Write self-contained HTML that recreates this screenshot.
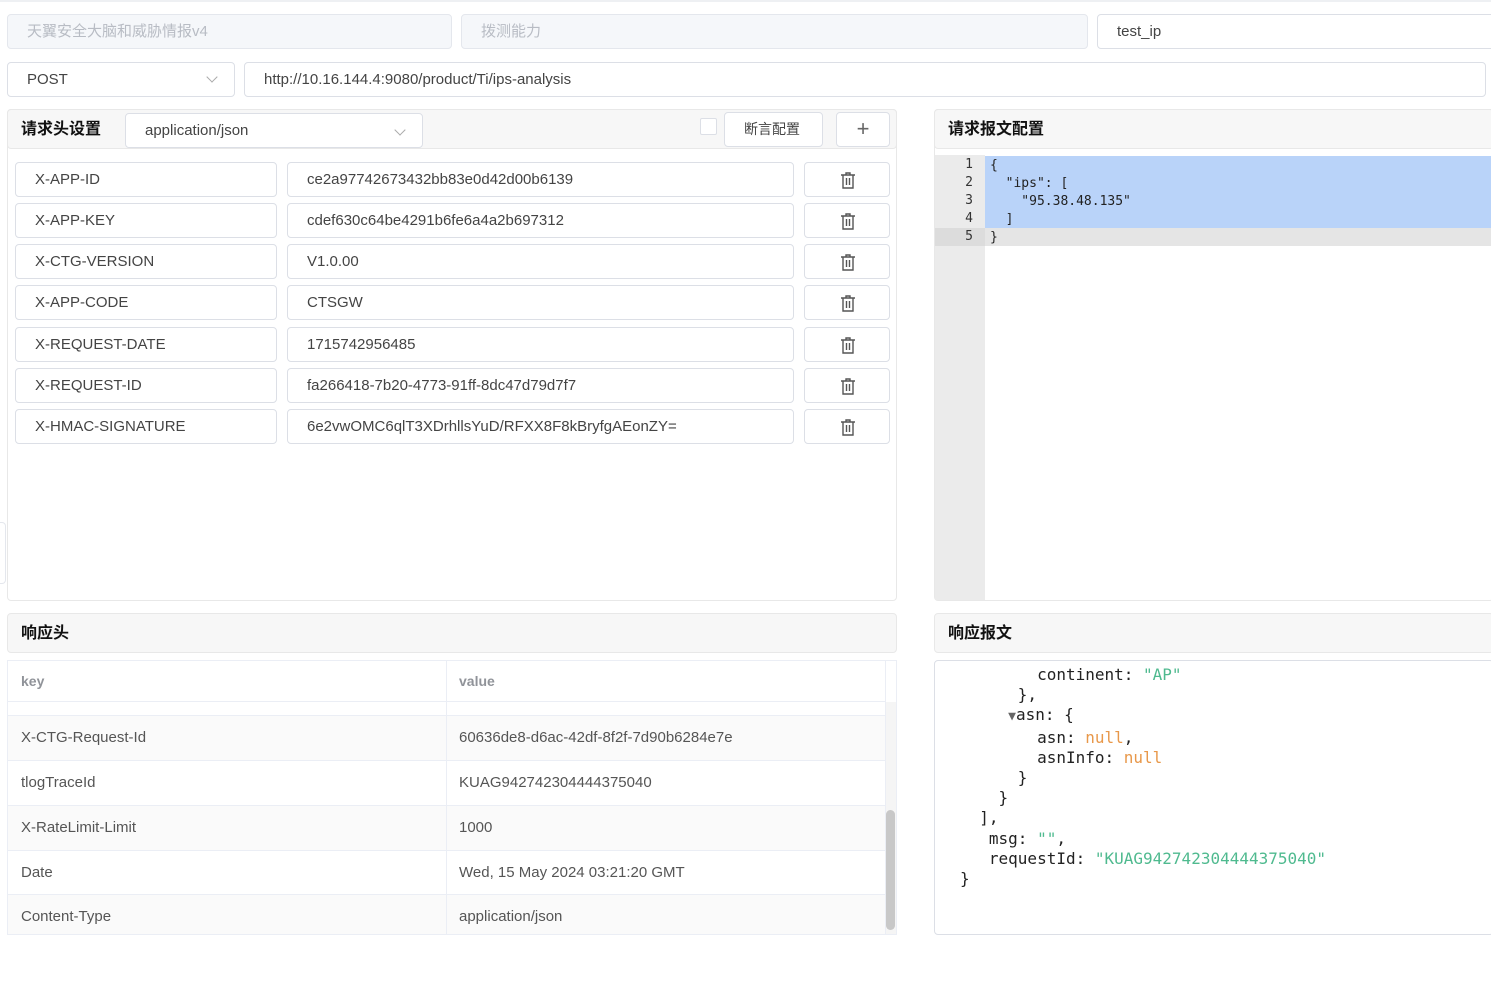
<!DOCTYPE html>
<html><head><meta charset="utf-8"><style>
*{box-sizing:border-box;margin:0;padding:0}
body{width:1491px;height:984px;overflow:hidden;background:#fff;font-family:"Liberation Sans","Noto Sans CJK SC",sans-serif;font-size:15px;color:#333;position:relative}
.a{position:absolute}
.inp{position:absolute;border:1px solid #dcdfe6;border-radius:4px;background:#fff;height:35px;line-height:33px;padding-left:19px;color:#444;font-size:15px;white-space:nowrap;overflow:hidden}
.dis{background:#f5f7fa;border-color:#e4e7ed;color:#b8bcc4}
.hdr{position:absolute;background:#f7f7f7;border:1px solid #e8e8e8;border-radius:4px;font-weight:bold;font-size:16px;color:#111;padding-left:13px;line-height:38px}
.chev{position:absolute;width:8px;height:8px;border-right:1px solid #aaa;border-bottom:1px solid #aaa;transform:rotate(45deg)}
.del{position:absolute;left:804px;width:86px;height:35px;border:1px solid #dcdfe6;border-radius:4px;background:#fff}
.del svg{position:absolute;left:35px;top:9px}
.mono{font-family:"DejaVu Sans Mono","Liberation Mono",monospace}
.tr{position:absolute;left:8px;width:877px;border-bottom:1px solid #ebeef5;font-size:15px;color:#555}
.tr span{position:absolute;left:13px}
.tr b{position:absolute;left:451px;font-weight:normal}
</style></head><body>
<div class="a" style="left:0;top:0;width:1491px;height:2px;background:#eef0f3"></div>
<div class="inp dis" style="left:7px;top:14px;width:445px;height:35px">天翼安全大脑和威胁情报v4</div>
<div class="inp dis" style="left:461px;top:14px;width:627px;height:35px">拨测能力</div>
<div class="inp" style="left:1097px;top:14px;width:400px;height:35px">test_ip</div>
<div class="inp" style="left:7px;top:62px;width:228px;height:35px">POST</div>
<div class="chev" style="left:208px;top:73px"></div>
<div class="inp" style="left:244px;top:62px;width:1242px;height:35px">http://10.16.144.4:9080/product/Ti/ips-analysis</div>

<div class="a" style="left:7px;top:109px;width:890px;height:492px;border:1px solid #e8e8e8;border-radius:4px"></div>
<div class="hdr" style="left:7px;top:109px;width:890px;height:40px;line-height:40px">请求头设置</div>
<div class="inp" style="left:125px;top:113px;width:298px;height:35px">application/json</div>
<div class="chev" style="left:396px;top:126px"></div>
<div class="a" style="left:700px;top:118px;width:17px;height:17px;border:1px solid #dcdfe6;border-radius:2px;background:#fff"></div>
<div class="inp" style="left:724px;top:112px;width:99px;height:35px;padding-left:19px;font-size:14px">断言配置</div>
<div class="inp" style="left:836px;top:112px;width:54px;height:35px;padding:0;text-align:center;font-size:22px;color:#666;line-height:31px">+</div>

<div class="inp" style="left:15px;top:162px;width:262px">X-APP-ID</div>
<div class="inp" style="left:287px;top:162px;width:507px">ce2a97742673432bb83e0d42d00b6139</div>
<div class="inp" style="left:15px;top:203px;width:262px">X-APP-KEY</div>
<div class="inp" style="left:287px;top:203px;width:507px">cdef630c64be4291b6fe6a4a2b697312</div>
<div class="inp" style="left:15px;top:244px;width:262px">X-CTG-VERSION</div>
<div class="inp" style="left:287px;top:244px;width:507px">V1.0.00</div>
<div class="inp" style="left:15px;top:285px;width:262px">X-APP-CODE</div>
<div class="inp" style="left:287px;top:285px;width:507px">CTSGW</div>
<div class="inp" style="left:15px;top:327px;width:262px">X-REQUEST-DATE</div>
<div class="inp" style="left:287px;top:327px;width:507px">1715742956485</div>
<div class="inp" style="left:15px;top:368px;width:262px">X-REQUEST-ID</div>
<div class="inp" style="left:287px;top:368px;width:507px">fa266418-7b20-4773-91ff-8dc47d79d7f7</div>
<div class="inp" style="left:15px;top:409px;width:262px">X-HMAC-SIGNATURE</div>
<div class="inp" style="left:287px;top:409px;width:507px">6e2vwOMC6qlT3XDrhllsYuD/RFXX8F8kBryfgAEonZY=</div>
<div class="del" style="top:162px"><svg width="16" height="17" viewBox="0 0 16 17" fill="none" stroke="#555" stroke-width="1.4"><path d="M1 3h14M6 3V1h4v2M3 3v13h10V3M6.5 6v7M9.5 6v7"/></svg></div>
<div class="del" style="top:203px"><svg width="16" height="17" viewBox="0 0 16 17" fill="none" stroke="#555" stroke-width="1.4"><path d="M1 3h14M6 3V1h4v2M3 3v13h10V3M6.5 6v7M9.5 6v7"/></svg></div>
<div class="del" style="top:244px"><svg width="16" height="17" viewBox="0 0 16 17" fill="none" stroke="#555" stroke-width="1.4"><path d="M1 3h14M6 3V1h4v2M3 3v13h10V3M6.5 6v7M9.5 6v7"/></svg></div>
<div class="del" style="top:285px"><svg width="16" height="17" viewBox="0 0 16 17" fill="none" stroke="#555" stroke-width="1.4"><path d="M1 3h14M6 3V1h4v2M3 3v13h10V3M6.5 6v7M9.5 6v7"/></svg></div>
<div class="del" style="top:327px"><svg width="16" height="17" viewBox="0 0 16 17" fill="none" stroke="#555" stroke-width="1.4"><path d="M1 3h14M6 3V1h4v2M3 3v13h10V3M6.5 6v7M9.5 6v7"/></svg></div>
<div class="del" style="top:368px"><svg width="16" height="17" viewBox="0 0 16 17" fill="none" stroke="#555" stroke-width="1.4"><path d="M1 3h14M6 3V1h4v2M3 3v13h10V3M6.5 6v7M9.5 6v7"/></svg></div>
<div class="del" style="top:409px"><svg width="16" height="17" viewBox="0 0 16 17" fill="none" stroke="#555" stroke-width="1.4"><path d="M1 3h14M6 3V1h4v2M3 3v13h10V3M6.5 6v7M9.5 6v7"/></svg></div>
<div class="a" style="left:0;top:522px;width:6px;height:62px;border:1px solid #e4e7ed;border-left:none;border-radius:0 4px 4px 0"></div>

<div class="a" style="left:934px;top:109px;width:560px;height:492px;border:1px solid #e8e8e8;border-radius:4px"></div>
<div class="hdr" style="left:934px;top:109px;width:560px;height:40px;line-height:40px">请求报文配置</div>
<div class="a" style="left:935px;top:155px;width:50px;height:445px;background:#ebebeb"></div>
<div class="a" style="left:985px;top:156px;width:506px;height:72px;background:#b9d3f9"></div>
<div class="a" style="left:935px;top:228px;width:556px;height:18px;background:#e5e5e5"></div>
<div class="a" style="left:935px;top:228px;width:50px;height:18px;background:#dcdcdc"></div>
<div class="a mono" style="left:935px;top:156px;width:38px;text-align:right;font-size:13px;line-height:18px;color:#333">1<br>2<br>3<br>4<br>5</div>
<div class="a mono" style="left:990px;top:157px;font-size:13px;line-height:18px;color:#222;white-space:pre">{
  "ips": [
    "95.38.48.135"
  ]
}</div>

<div class="hdr" style="left:7px;top:613px;width:890px;height:40px;line-height:40px">响应头</div>
<div class="a" style="left:7px;top:660px;width:890px;height:275px;border:1px solid #ebeef5"></div>
<div class="tr" style="top:661px;height:41px;line-height:41px;font-weight:bold;color:#909399;font-size:14px"><span>key</span><b style="font-weight:bold">value</b></div>
<div class="tr" style="top:702px;height:14px"></div>
<div class="tr" style="top:716px;height:45px;line-height:44px;background:#fafafa"><span>X-CTG-Request-Id</span><b>60636de8-d6ac-42df-8f2f-7d90b6284e7e</b></div>
<div class="tr" style="top:761px;height:45px;line-height:44px"><span>tlogTraceId</span><b>KUAG942742304444375040</b></div>
<div class="tr" style="top:806px;height:45px;line-height:44px;background:#fafafa"><span>X-RateLimit-Limit</span><b>1000</b></div>
<div class="tr" style="top:851px;height:44px;line-height:43px"><span>Date</span><b>Wed, 15 May 2024 03:21:20 GMT</b></div>
<div class="tr" style="top:895px;height:39px;line-height:44px;background:#fafafa;border:none"><span>Content-Type</span><b>application/json</b></div>
<div class="a" style="left:446px;top:661px;width:1px;height:273px;background:#ebeef5"></div>
<div class="a" style="left:885px;top:661px;width:1px;height:273px;background:#ebeef5"></div>
<div class="a" style="left:886px;top:702px;width:10px;height:232px;background:#f5f5f5"></div>
<div class="a" style="left:886px;top:810px;width:9px;height:120px;background:#c8c8c8;border-radius:5px"></div>

<div class="hdr" style="left:934px;top:613px;width:560px;height:40px;line-height:40px">响应报文</div>
<div class="a" style="left:934px;top:660px;width:560px;height:275px;border:1px solid #dcdfe6;border-radius:4px"></div>
<div class="a mono" style="left:960px;top:665px;font-size:16px;line-height:20.2px;color:#222;white-space:pre">        continent: <span style="color:#4fba8f">"AP"</span>
      },
     <span style="color:#666;font-size:13px">▼</span>asn: {
        asn: <span style="color:#e8984a">null</span>,
        asnInfo: <span style="color:#e8984a">null</span>
      }
    }
  ],
   msg: <span style="color:#4fba8f">""</span>,
   requestId: <span style="color:#4fba8f">"KUAG942742304444375040"</span>
}</div>
</body></html>
